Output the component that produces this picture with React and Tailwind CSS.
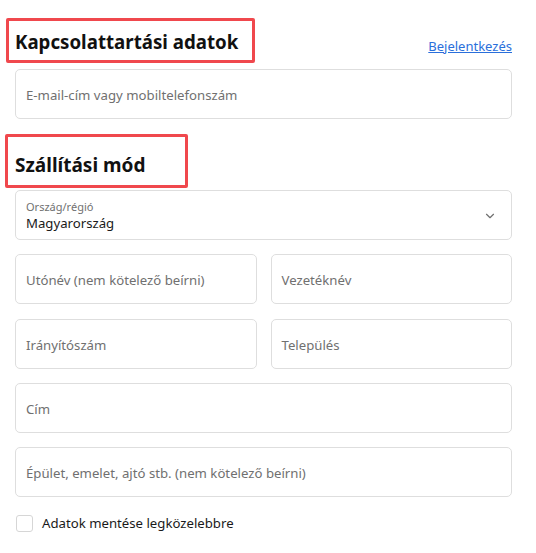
import { ChevronDown } from "lucide-react";

const Field = ({ placeholder, className = "" }) => (
  <div
    className={`h-[50px] rounded-[5px] border border-[#dedede] bg-white flex items-center px-[10px] pt-[3px] text-[13.2px] text-[#707070] ${className}`}
  >
    {placeholder}
  </div>
);

export default function App() {
  return (
    <div
      className="min-h-[553px] bg-white pl-[15px] pt-[18px]"
      style={{ fontFamily: '"Noto Sans", "Open Sans", sans-serif' }}
    >
      <div className="w-[497px]">
        {/* Kapcsolattartás */}
        <div className="flex justify-between">
          <div className="-ml-[9px] h-[45px] w-[249px] border-[3px] border-[#f0484d] rounded-[2px] pl-[6px] flex items-center pt-[4px]">
            <h2 className="text-[18.7px] font-bold text-[#111] leading-none whitespace-nowrap">
              Kapcsolattartási adatok
            </h2>
          </div>
          <a
            href="#"
            className="self-end mb-[8px] text-[13px] leading-[18px] text-[#2a6fdb] underline"
          >
            Bejelentkezés
          </a>
        </div>

        <Field placeholder="E-mail-cím vagy mobiltelefonszám" className="mt-[6px]" />

        {/* Szállítás */}
        <div className="mt-[15px] -ml-[10px] h-[54px] w-[183px] border-[3px] border-[#f0484d] rounded-[2px] pl-[7px] flex items-center pt-[8px]">
          <h2 className="text-[19px] font-bold text-[#111] leading-none whitespace-nowrap">
            Szállítási mód
          </h2>
        </div>

        <div className="mt-[2px] h-[50px] rounded-[5px] border border-[#dedede] flex items-center justify-between px-[10px] pt-[2px]">
          <div className="flex flex-col">
            <span className="text-[11px] leading-[14px] text-[#707070]">Ország/régió</span>
            <span className="text-[13.2px] leading-[19px] text-[#1a1a1a]">Magyarország</span>
          </div>
          <ChevronDown className="w-[14px] h-[14px] text-[#707070] mr-[4px]" strokeWidth={2} />
        </div>

        <div className="mt-[14px] grid grid-cols-2 gap-[14px]">
          <Field placeholder="Utónév (nem kötelező beírni)" />
          <Field placeholder="Vezetéknév" />
        </div>

        <div className="mt-[15px] grid grid-cols-2 gap-[14px]">
          <Field placeholder="Irányítószám" />
          <Field placeholder="Település" />
        </div>

        <Field placeholder="Cím" className="mt-[14px]" />
        <Field placeholder="Épület, emelet, ajtó stb. (nem kötelező beírni)" className="mt-[14px]" />

        <label className="mt-[16px] flex items-center gap-[9px] ml-[1px]">
          <span className="w-[17px] h-[17px] rounded-[3px] border border-[#d6d6d6] bg-white" />
          <span className="text-[13.2px] text-[#1a1a1a] pt-[1px]">Adatok mentése legközelebbre</span>
        </label>
      </div>
    </div>
  );
}
